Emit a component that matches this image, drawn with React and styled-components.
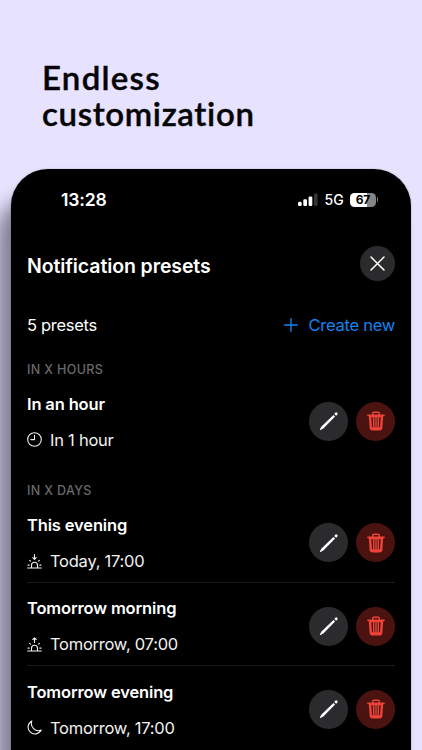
import React from "react";
import styled, { createGlobalStyle } from "styled-components";

const Global = createGlobalStyle`
  * { box-sizing: border-box; }
  body { margin: 0; background: #e7e2fd; font-family: Inter, "Liberation Sans", sans-serif; }
`;

const Poster = styled.div`
  height: 750px;
  width: 422px;
  overflow: hidden;
  background: #e7e2fd;
  display: flex;
  flex-direction: column;
`;

const Headline = styled.h1`
  margin: 0;
  padding: 59px 0 0 42px;
  height: 169.4px;
  flex: none;
  font: 600 33px/36px Lato, sans-serif;
  color: #050507;
  -webkit-text-stroke: 0.4px #050507;
`;

const HeadLine = styled.span`
  display: block;
  white-space: nowrap;
  letter-spacing: ${(p) => p.$spacing}px;
`;

const Phone = styled.main`
  width: 400px;
  height: 640px;
  flex: none;
  margin-left: 11px;
  padding: 0 16px;
  border-radius: 37px 37px 0 0;
  background: #000;
  color: #fff;
  box-shadow: -14px 28px 18px rgba(12, 10, 24, 0.46), 0 0 2px rgba(60, 55, 80, 0.35);
`;

const StatusBar = styled.div`
  height: 60.6px;
  padding: 0 17px 0 34px;
  display: flex;
  align-items: center;
  justify-content: space-between;
`;

const Time = styled.span`
  font-size: 17.6px;
  font-weight: 600;
  letter-spacing: -0.2px;
`;

const StatusRight = styled.div`
  display: flex;
  align-items: center;
  gap: 6.5px;
`;

const Network = styled.span`
  font-size: 14px;
  font-weight: 500;
  letter-spacing: -0.1px;
`;

const Battery = styled.div`
  display: flex;
  align-items: center;
  gap: 1px;
`;

const BatteryBody = styled.div`
  width: 25.5px;
  height: 14px;
  border-radius: 4.5px;
  background: linear-gradient(90deg, #fff 67%, #858585 67%);
  color: #000;
  font-size: 12px;
  line-height: 14px;
  font-weight: 700;
  letter-spacing: -0.3px;
  text-align: center;
`;

const BatteryTip = styled.div`
  width: 1.5px;
  height: 5px;
  border-radius: 0 2px 2px 0;
  background: #777;
`;

const TitleBar = styled.header`
  height: 67px;
  display: flex;
  align-items: center;
  justify-content: space-between;
`;

const Title = styled.h2`
  margin: 5px 0 0;
  font-size: 19.5px;
  font-weight: 600;
  letter-spacing: -0.1px;
`;

const CircleButton = styled.button`
  width: ${(p) => p.$size}px;
  height: ${(p) => p.$size}px;
  flex: none;
  padding: 0;
  border: 0;
  border-radius: 50%;
  display: grid;
  place-items: center;
  background: ${(p) => (p.$danger ? "#4a1310" : "#2b2b2d")};
  color: ${(p) => (p.$danger ? "#ed4339" : "#fff")};
`;

const Summary = styled.div`
  height: 55px;
  padding-top: 1.4px;
  display: flex;
  align-items: center;
  justify-content: space-between;
  font-size: 16.5px;
  letter-spacing: -0.3px;
`;

const CreateButton = styled.button`
  display: flex;
  align-items: center;
  gap: 10px;
  padding: 0;
  border: 0;
  background: none;
  color: #1583f0;
  font: inherit;
  letter-spacing: -0.25px;
`;

const SectionLabel = styled.h3`
  margin: ${(p) => p.$top}px 0 0;
  font-size: 12.5px;
  line-height: 18px;
  font-weight: 500;
  letter-spacing: 0.36px;
  color: #69696b;
`;

const Row = styled.div`
  height: 83.3px;
  padding-top: 13.2px;
  display: flex;
  justify-content: space-between;
  border-bottom: 1px solid transparent;
  ${(p) => p.$divider && "border-bottom-color: #1b1b1c;"}
`;

const RowText = styled.div`
  display: flex;
  flex-direction: column;
  gap: 12px;
  line-height: 24px;
`;

const RowTitle = styled.div`
  font-size: 16.5px;
  font-weight: 600;
  letter-spacing: -0.15px;
`;

const RowDetail = styled.div`
  display: flex;
  align-items: center;
  gap: 8px;
  font-size: 16.5px;
  letter-spacing: -0.25px;
  color: #f1f1f1;
`;

const Actions = styled.div`
  display: flex;
  gap: 8px;
  padding-top: 10.2px;
`;

const Signal = () => (
  <svg width="20" height="13" viewBox="0 0 20 13" fill="#fff">
    <rect x="0" y="8.8" width="3.7" height="4.2" rx="1.2" />
    <rect x="5.3" y="6.3" width="3.7" height="6.7" rx="1.2" />
    <rect x="10.6" y="3.5" width="3.7" height="9.5" rx="1.2" />
    <rect x="15.9" y="0.5" width="3.7" height="12.5" rx="1.2" fill="#343435" />
  </svg>
);

const Close = () => (
  <svg width="15" height="15" viewBox="0 0 15 15" stroke="#fff" strokeWidth="1.5" strokeLinecap="round">
    <path d="M1 1 14 14M14 1 1 14" />
  </svg>
);

const Plus = () => (
  <svg width="14" height="14" viewBox="0 0 14 14" stroke="currentColor" strokeWidth="1.4" strokeLinecap="round">
    <path d="M7 .7V13.3M.7 7H13.3" />
  </svg>
);

const Pencil = () => (
  <svg width="20" height="20" viewBox="0 0 20 20" fill="#fff">
    <path d="M14.4 3.9 16.1 5.6 4.6 17.3 1.6 18.9Q.6 19.2 .9 18.2L2.5 15.4Z" />
    <path d="M15.3 2.9 16.2 1.8Q17.2.9 18.2 1.8T18.2 3.8L17.1 4.7Z" />
  </svg>
);

const Trash = () => (
  <svg width="18" height="20" viewBox="0 0 18 20" fill="none" stroke="currentColor" strokeLinecap="round" strokeLinejoin="round">
    <path d="M5.7 4V2.4Q5.7 1.2 6.9 1.2H11.1Q12.3 1.2 12.3 2.4V4" strokeWidth="1.4" />
    <path d="M.9 4.4H17.1" strokeWidth="1.6" />
    <path d="M3 5 3.8 16.6Q3.9 18.2 5.5 18.2H12.5Q14.1 18.2 14.2 16.6L15 5" strokeWidth="2.4" />
    <path d="M3.6 5.4H14.4M5 17.2H13" strokeWidth="1.8" />
    <path d="M6.6 6.5 6.8 16.5M9 6.5V16.5M11.4 6.5 11.2 16.5" strokeWidth="1.4" />
  </svg>
);

const Clock = () => (
  <svg width="15" height="15" viewBox="0 0 15 15" fill="none" stroke="currentColor" strokeWidth="1.1" strokeLinecap="round" strokeLinejoin="round">
    <circle cx="7.5" cy="7.5" r="6.8" />
    <path d="M7.5 3.2V7.6H3.9" />
  </svg>
);

const Sun = ({ rising }) => (
  <svg width="15" height="15" viewBox="0 0 15 15" fill="none" stroke="currentColor" strokeWidth="1.1" strokeLinecap="round" strokeLinejoin="round">
    <path d="M.7 14H14.3M4.5 13.7V11.3A3 3 0 0 1 10.5 11.3V13.7M1 11.1H2.2M12.8 11.1H14M2.6 6.3 3.5 7.2M12.4 6.3 11.5 7.2" />
    <path d={rising ? "M7.5 5.5V.9M5.8 2.5 7.5.8 9.2 2.5" : "M7.5.6V5.2M5.8 3.6 7.5 5.3 9.2 3.6"} />
  </svg>
);

const Moon = () => (
  <svg width="15" height="15" viewBox="0 0 15 15" fill="none" stroke="currentColor" strokeWidth="1.1" strokeLinejoin="round">
    <path d="M4.9.9A6.9 6.9 0 1 0 14.2 10.1 7.1 7.1 0 0 1 4.9.9Z" />
  </svg>
);

const icons = {
  clock: <Clock />,
  sunset: <Sun />,
  sunrise: <Sun rising />,
  moon: <Moon />,
};

const sections = [
  { label: "IN X HOURS", top: 8.6, items: [{ title: "In an hour", detail: "In 1 hour", icon: "clock" }] },
  {
    label: "IN X DAYS",
    top: 20,
    items: [
      { title: "This evening", detail: "Today, 17:00", icon: "sunset" },
      { title: "Tomorrow morning", detail: "Tomorrow, 07:00", icon: "sunrise" },
      { title: "Tomorrow evening", detail: "Tomorrow, 17:00", icon: "moon" },
    ],
  },
];

const Preset = ({ title, detail, icon, divider }) => (
  <Row $divider={divider}>
    <RowText>
      <RowTitle>{title}</RowTitle>
      <RowDetail>
        {icons[icon]}
        <span>{detail}</span>
      </RowDetail>
    </RowText>
    <Actions>
      <CircleButton $size={39} aria-label="Edit"><Pencil /></CircleButton>
      <CircleButton $size={39} $danger aria-label="Delete"><Trash /></CircleButton>
    </Actions>
  </Row>
);

export default function App() {
  return (
    <>
      <Global />
      <Poster>
        <Headline>
          <HeadLine $spacing={1.25}>Endless</HeadLine>
          <HeadLine $spacing={0.65}>customization</HeadLine>
        </Headline>
        <Phone>
          <StatusBar>
            <Time>13:28</Time>
            <StatusRight>
              <Signal />
              <Network>5G</Network>
              <Battery>
                <BatteryBody>67</BatteryBody>
                <BatteryTip />
              </Battery>
            </StatusRight>
          </StatusBar>
          <TitleBar>
            <Title>Notification presets</Title>
            <CircleButton $size={35} aria-label="Close"><Close /></CircleButton>
          </TitleBar>
          <Summary>
            <span>5 presets</span>
            <CreateButton><Plus />Create new</CreateButton>
          </Summary>
          {sections.map((s) => (
            <section key={s.label}>
              <SectionLabel $top={s.top}>{s.label}</SectionLabel>
              {s.items.map((item, i) => (
                <Preset key={item.title} {...item} divider={i < s.items.length - 1} />
              ))}
            </section>
          ))}
        </Phone>
      </Poster>
    </>
  );
}
